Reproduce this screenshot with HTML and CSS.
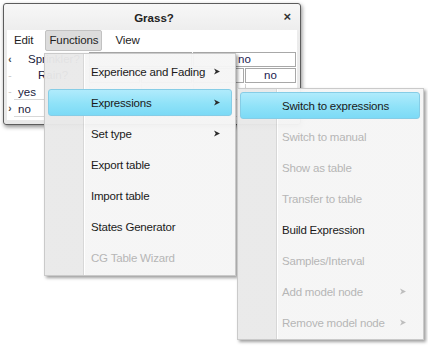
FILE: index.html
```html
<!DOCTYPE html>
<html>
<head>
<meta charset="utf-8">
<link rel="stylesheet" href="styles.css">
</head>
<body>
<div class="window">
  <div class="titlebar">
    <span class="title">Grass?</span>
    <span class="close">×</span>
  </div>
  <div class="menubar">
    <span class="mb-item">Edit</span>
    <span class="mb-item pressed">Functions</span>
    <span class="mb-item">View</span>
  </div>
  <div class="content">
    <div class="grid">
      <div class="arr">‹</div><div class="lbl lbl1">Sprinkler?</div>
      <div class="cell span2"></div><div class="cell span2 right">no</div>
      <div class="arr dash">-</div><div class="lbl lbl2">Rain?</div>
      <div class="cell"></div><div class="cell"></div><div class="cell"></div><div class="cell">no</div>
      <div class="arr dash">-</div><div class="lbl row">yes</div>
      <div class="val"></div><div class="val"></div><div class="val"></div><div class="val"></div>
      <div class="arr">›</div><div class="lbl row">no</div>
      <div class="val"></div><div class="val"></div><div class="val"></div><div class="val"></div>
    </div>
  </div>
</div>

<div class="menu main">
  <div class="item">Experience and Fading<svg class="sub" viewBox="0 0 7 7"><polygon points="0,0 7,3.5 0,7 2,3.5"/></svg></div>
  <div class="item active">Expressions<svg class="sub" viewBox="0 0 7 7"><polygon points="0,0 7,3.5 0,7 2,3.5"/></svg></div>
  <div class="item">Set type<svg class="sub" viewBox="0 0 7 7"><polygon points="0,0 7,3.5 0,7 2,3.5"/></svg></div>
  <div class="item">Export table</div>
  <div class="item">Import table</div>
  <div class="item">States Generator</div>
  <div class="item disabled">CG Table Wizard</div>
</div>

<div class="menu submenu">
  <div class="item active">Switch to expressions</div>
  <div class="item disabled">Switch to manual</div>
  <div class="item disabled">Show as table</div>
  <div class="item disabled">Transfer to table</div>
  <div class="item">Build Expression</div>
  <div class="item disabled">Samples/Interval</div>
  <div class="item disabled">Add model node<svg class="sub" viewBox="0 0 7 7"><polygon points="0,0 7,3.5 0,7 2,3.5"/></svg></div>
  <div class="item disabled">Remove model node<svg class="sub" viewBox="0 0 7 7"><polygon points="0,0 7,3.5 0,7 2,3.5"/></svg></div>
</div>
</body>
</html>
```

FILE: styles.css
```css
html, body {
  margin: 0;
  padding: 0;
  background: #ffffff;
}
body {
  font-family: "Liberation Sans", Arial, sans-serif;
  font-size: 11px;
  color: #1e1e1e;
  width: 428px;
  height: 346px;
  position: relative;
  overflow: hidden;
}
.window {
  margin: 3px 0 0 3px;
  width: 298px;
  height: 122px;
  box-sizing: border-box;
  border: 1px solid #5c5c5c;
  border-radius: 3px;
  background: linear-gradient(#f7f7f7, #ececec 30px, #e8e8e8);
  box-shadow: 1px 2px 4px rgba(0,0,0,0.45);
  display: flex;
  flex-direction: column;
  padding: 0 3px 4px 3px;
}
.titlebar {
  height: 26px;
  display: flex;
  align-items: center;
  justify-content: center;
  position: relative;
}
.title {
  font-weight: bold;
  font-size: 11.5px;
  color: #222;
  margin-left: 4px;
  margin-top: 1px;
}
.close {
  position: absolute;
  right: 6px;
  top: 6px;
  font-weight: bold;
  font-size: 13px;
  line-height: 14px;
  color: #333;
}
.menubar {
  height: 21px;
  background: #ffffff;
  display: flex;
  align-items: center;
  padding-left: 3px;
}
.mb-item {
  padding: 0 4px;
  height: 19px;
  line-height: 19px;
  margin-right: 8px;
  color: #1e1e1e;
  font-size: 11.5px;
  letter-spacing: -0.1px;
}
.mb-item.pressed {
  background: #dcdcdc;
  border: 1px solid #c2c2c2;
  border-radius: 2px;
  padding: 0 3px;
  margin-right: 9px;
}
.content {
  flex: 1;
  background: #ffffff;
  padding-top: 1px;
}
.grid {
  display: grid;
  grid-template-columns: 6px 74px repeat(4, 51px);
  grid-template-rows: 15px 15px 16px 16px;
  column-gap: 1px;
  row-gap: 1px;
}
.arr {
  font-size: 10px;
  color: #444;
  line-height: 15px;
  text-align: center;
  font-weight: bold;
}
.arr.dash {
  color: #c8c8c8;
  font-weight: normal;
}
.lbl {
  color: #1a1a3c;
  line-height: 15px;
  font-size: 11.5px;
  white-space: nowrap;
  overflow: hidden;
}
.lbl1 { padding-left: 14px; }
.lbl2 { padding-left: 24px; }
.lbl.row {
  padding-left: 4px;
  border-bottom: 1px solid #d8d8d8;
  line-height: 16px;
}
.cell {
  border: 1px solid #a8a8a8;
  color: #1a1a50;
  text-align: center;
  line-height: 13px;
  font-size: 11.5px;
}
.cell.right {
  text-align: left;
  padding-left: 44px;
}
.span2 { grid-column: span 2; }
.val {
  border-bottom: 1px solid #d8d8d8;
  border-left: 1px solid #d0d0d0;
}
.menu {
  position: absolute;
  box-sizing: border-box;
  border: 1px solid #cacaca;
  background:
    linear-gradient(to right, rgba(233,233,233,0.96) 0, rgba(233,233,233,0.96) 38px, rgba(214,214,214,0.97) 38px, rgba(214,214,214,0.97) 39px, rgba(255,255,255,0.97) 39px, rgba(255,255,255,0.97) 40px, rgba(245,245,245,0.96) 40px);
  box-shadow: 2px 2px 3px rgba(0,0,0,0.38);
  display: flex;
  flex-direction: column;
}
.main {
  left: 44px;
  top: 53px;
  width: 192px;
  padding: 2px 0;
}
.submenu {
  left: 237px;
  top: 88px;
  width: 187px;
  padding: 1px 0;
}
.item {
  height: 27px;
  box-sizing: border-box;
  margin: 2px 3px;
  border: 1px solid transparent;
  border-radius: 3px;
  display: flex;
  align-items: center;
  padding-left: 42px;
  padding-right: 11px;
  font-size: 11.5px;
  letter-spacing: -0.2px;
  color: #1a1a1a;
  position: relative;
}
.submenu .item {
  margin: 2px 3px 2px 2px;
  padding-left: 41px;
  padding-right: 13px;
}
.item.active {
  background: linear-gradient(#b0ebfc, #8fe2f8 55%, #7cdaf6);
  border-color: #86cde6;
}
.item.disabled {
  color: #b6b6b6;
}
.sub {
  width: 6px;
  height: 7px;
  margin-left: auto;
  fill: #2a2a2a;
}
.item.disabled .sub {
  fill: #bdbdbd;
}
```
